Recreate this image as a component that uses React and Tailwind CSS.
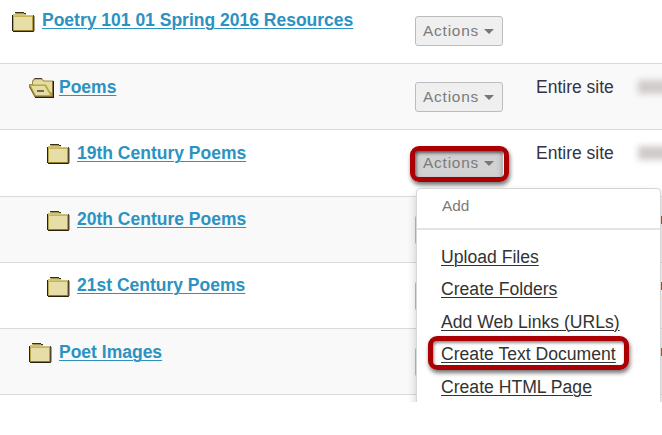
function Folder() {
  return (
    <svg className="block shrink-0" width="23" height="20" viewBox="0 0 23 20" shapeRendering="crispEdges">
      <path d="M0 3h1v16H0zM1 19h21v1H1z" fill="#2a2010" />
      <path d="M1 2h2v-1h9v1h2v1h8v16H1z" fill="#cfc377" />
      <path d="M3 0h9v1H3zM12 1h2v1h-2z" fill="#38301c" />
      <path d="M4 1h8v1H4z" fill="#a39655" />
      <path d="M1 5h19v13H1z" fill="#e6dea6" />
      <path d="M3 4h17v1H3z" fill="#c4b453" />
      <path d="M1 4h1v14H1z" fill="#b9a848" />
      <path d="M1 18h20v1H1z" fill="#8f7d26" />
      <path d="M20 4h1v14h-1z" fill="#b3a141" />
      <path d="M21 3h1v17h-1z" fill="#54432b" />
      <path d="M22 4h1v15h-1z" fill="#a69d96" />
    </svg>
  );
}

function OpenFolder() {
  return (
    <svg className="block shrink-0" width="25" height="20" viewBox="0 0 25 20">
      <path d="M3 6V3l2-2.500h8l2 2h8.500L25 3v16.500H6L0 9V6z" fill="#9a8848" />
      <path d="M4 6.500V3.500l2-2h6.500l2 2H23V15z" fill="#e4dba0" />
      <path d="M0.500 6.500h16.500L23.500 18H6z" fill="#b9a83f" />
      <path d="M2 8h13.800l5.200 9H6.800z" fill="#e6dda2" />
      <path d="M5.500 0.500h7.500" stroke="#4a3b28" />
      <path d="M6 19.400h18.400V3" fill="none" stroke="#2f1e14" strokeWidth="1.200" />
      <path d="M0.500 8.500l5.500 10.500" stroke="#77662c" strokeWidth="0.800" />
      <path d="M8 13h7" stroke="#625c50" strokeWidth="1.800" />
    </svg>
  );
}

function ActionsButton({ active, covered }) {
  return (
    <div className={`relative flex h-[30px] w-[88px] items-center rounded-[3px] border border-[#bcbcbc] pl-[7px] text-[15.4px] leading-[28px] tracking-[0.8px] text-[#7b7b7b] ${active ? "bg-[#d2d2d2] shadow-[inset_0_3px_5px_#999]" : "bg-[#efefef]"}`}>
      {!covered && (
        <>
          Actions
          <span className="ml-[5px] mt-[1px] border-x-[5px] border-t-[5px] border-x-transparent border-t-[#777777]" />
        </>
      )}
      {active && (
        <span className="absolute -left-[6px] -top-[3px] h-[36px] w-[99px] rounded-[9px] border-[5px] border-[#ab0003] shadow-[1px_3px_4px_rgba(0,0,0,0.55),inset_1px_2px_3px_rgba(0,0,0,0.45)]" />
      )}
    </div>
  );
}

const rows = [
  { name: "Poetry 101 01 Spring 2016 Resources", row: "h-[66px] -mt-[2px] bg-white", pad: "pl-[12px]", link: "-mt-[2px]" },
  { name: "Poems", row: "h-[66px] bg-[#f9f9f9]", pad: "pl-[29px]", link: "-mt-[1px]", open: true, site: true },
  { name: "19th Century Poems", row: "h-[67px] bg-white", pad: "pl-[47px]", link: "-mt-[1px]", site: true, active: true },
  { name: "20th Centure Poems", row: "h-[66px] bg-[#f9f9f9]", pad: "pl-[47px]", link: "-mt-[2px]", covered: true },
  { name: "21st Century Poems", row: "h-[66px] bg-white", pad: "pl-[47px]", link: "-mt-[2px]", covered: true },
  { name: "Poet Images", row: "h-[66px] bg-[#f9f9f9]", pad: "pl-[29px]", link: "-mt-[1px]", covered: true },
];

const items = ["Upload Files", "Create Folders", "Add Web Links (URLs)", "Create Text Document", "Create HTML Page"];

export default function App() {
  return (
    <div className="h-[435px] w-[662px] overflow-hidden bg-white font-['Liberation_Sans',Arial,sans-serif]">
      <div className="relative flow-root h-[402px] overflow-hidden">
        {rows.map((r) => (
          <div key={r.name} className={`flex w-full items-start border-b border-[#dadada] ${r.row}`}>
            <div className={`flex w-[415px] shrink-0 items-start pt-[14px] ${r.pad}`}>
              {r.open ? <OpenFolder /> : <Folder />}
              <a className={`${r.open ? "ml-[5px]" : "ml-[7px]"} ${r.link} whitespace-nowrap text-[17.5px] leading-[20px] font-bold text-[#2b92c1] underline decoration-1 underline-offset-2`}>{r.name}</a>
            </div>
            <div className="w-[121px] shrink-0 pt-[18px]">
              <ActionsButton active={r.active} covered={r.covered} />
            </div>
            {r.site && (
              <>
                <span className="w-[102px] shrink-0 whitespace-nowrap pt-[13px] text-[17.5px] leading-[20px] text-[#333344]">Entire site</span>
                <span className="mt-[16px] h-[14px] w-[34px] shrink-0 bg-[#d0cbcb] blur-[3px]" />
              </>
            )}
            {r.covered && <span className="ml-[125px] mt-[19px] h-[8px] w-px bg-[#8f6548]" />}
          </div>
        ))}
        <div className="absolute left-[416px] top-[188px] h-[240px] w-[245px] rounded-t-[4px] border border-[#d6d6d6] bg-white shadow-[0_5px_10px_rgba(0,0,0,0.2)]">
          <div className="h-[41px] border-b-2 border-[#e3e3e3] pl-[25px] pt-[7px] text-[15.4px] leading-[20px] text-[#7b7b7b]">Add</div>
          <ul className="pl-[24px] pt-[10.5px]">
            {items.map((t) => (
              <li key={t} className="h-[32.5px] text-[17.6px] leading-[32.5px] text-[#333333]">
                <span className="relative whitespace-nowrap underline decoration-1 underline-offset-2">
                  {t}
                  {t === "Create Text Document" && (
                    <span className="absolute -left-[13px] -top-[8px] h-[34px] w-[201px] rounded-[9px] border-[5px] border-[#ab0003] shadow-[1px_3px_4px_rgba(0,0,0,0.55),inset_1px_2px_3px_rgba(0,0,0,0.45)]" />
                  )}
                </span>
              </li>
            ))}
          </ul>
        </div>
      </div>
    </div>
  );
}
